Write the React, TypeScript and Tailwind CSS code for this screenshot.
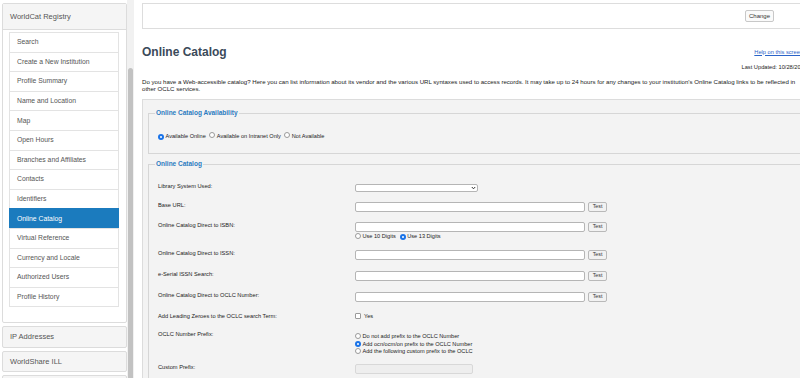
import React from "react";

const items = [
  "Search",
  "Create a New Institution",
  "Profile Summary",
  "Name and Location",
  "Map",
  "Open Hours",
  "Branches and Affiliates",
  "Contacts",
  "Identifiers",
  "Online Catalog",
  "Virtual Reference",
  "Currency and Locale",
  "Authorized Users",
  "Profile History",
];

function Radio({ checked }: { checked?: boolean }) {
  return checked ? (
    <span className="inline-flex w-[6px] h-[6px] rounded-full bg-[#1a73e8] items-center justify-center shrink-0">
      <span className="w-[2px] h-[2px] rounded-full bg-white" />
    </span>
  ) : (
    <span className="inline-block w-[6px] h-[6px] rounded-full border border-[#9a9a9a] bg-white shrink-0" />
  );
}

function TextInput({ w = "w-[230px]" }: { w?: string }) {
  return <div className={`${w} h-[10px] bg-white border border-[#b5b5b5] rounded-[2px]`} />;
}

function TestBtn() {
  return (
    <div className="ml-[3px] w-[19px] h-[10px] border border-[#b9b9b9] rounded-[2px] bg-[#f2f2f2] flex items-center justify-center text-[5.3px] leading-none text-[#333]">
      Test
    </div>
  );
}

function Row({ label, h, children }: { label: string; h: string; children: React.ReactNode }) {
  return (
    <div className={`flex items-start ${h}`}>
      <div className="w-[197px] shrink-0 text-[5.7px] leading-[7px] text-[#222]">{label}</div>
      <div className="mt-[0.5px]">{children}</div>
    </div>
  );
}

export default function App() {
  return (
    <div className="w-[800px] h-[378px] overflow-hidden bg-white flex font-['Liberation_Sans',Arial,sans-serif]">
      {/* Sidebar */}
      <aside className="w-[127px] shrink-0 pl-[2px] pt-[3px] flex flex-col gap-[3px]">
        <div className="border border-[#dcdcdc] rounded-[2px] bg-white">
          <div className="h-[26px] bg-[#f5f5f5] border-b border-[#dcdcdc] px-[7px] flex items-center text-[7.5px] text-[#555]">
            WorldCat Registry
          </div>
          <div className="pl-[6px] pr-[7px] pt-[2px] pb-[15px]">
            <div className="border-b border-[#e3e3e3]">
              {items.map((t) => (
                <div
                  key={t}
                  className={`h-[19.6px] border-t border-x flex items-center px-[7px] text-[6.8px] ${
                    t === "Online Catalog"
                      ? "bg-[#1b7bbe] border-[#1b7bbe] text-white"
                      : "border-[#e3e3e3] text-[#555]"
                  }`}
                >
                  {t}
                </div>
              ))}
            </div>
          </div>
        </div>
        <div className="h-[21.5px] shrink-0 bg-[#f5f5f5] border border-[#dcdcdc] rounded-[2px] px-[7px] flex items-center text-[7.5px] text-[#555]">
          IP Addresses
        </div>
        <div className="h-[21.5px] shrink-0 bg-[#f5f5f5] border border-[#dcdcdc] rounded-[2px] px-[7px] flex items-center text-[7.5px] text-[#555]">
          WorldShare ILL
        </div>
        <div className="h-[21.5px] shrink-0 bg-[#f5f5f5] border border-[#dcdcdc] rounded-[2px]" />
      </aside>

      {/* Scrollbar */}
      <div className="w-[7px] shrink-0 bg-[#f1f1f1] pt-[68px] flex justify-center">
        <div className="w-[5px] h-[330px] rounded-[3px] bg-[#c2c2c2]" />
      </div>

      {/* Main */}
      <main className="shrink-0 w-[680px] pl-[8px] pt-[3px]">
        <div className="w-[672px]">
          <div className="h-[26px] border border-[#dddddd] bg-white flex items-center justify-end pr-[39px]">
            <div className="h-[12px] px-[3px] border border-[#c8c8c8] rounded-[2px] bg-[#fafafa] flex items-center text-[6px] text-[#333]">
              Change
            </div>
          </div>

          <div className="w-[665px] mt-[16px] h-[14px] flex items-center justify-between">
            <h1 className="text-[12px] leading-[14px] font-bold text-[#3b4a5a]">Online Catalog</h1>
            <a className="mr-[4px] text-[5.7px] leading-[7px] text-[#2a63c8] underline">Help on this screen</a>
          </div>

          <div className="w-[665px] mt-[4.5px] flex justify-end text-[5.7px] leading-[7px] text-[#222]">
            Last Updated: 10/28/2021
          </div>

          <p className="mt-[7px] w-[656px] text-[6.1px] leading-[7px] text-[#222]">
            Do you have a Web-accessible catalog? Here you can list information about its vendor and the various URL
            syntaxes used to access records. It may take up to 24 hours for any changes to your institution's Online
            Catalog links to be reflected in other OCLC services.
          </p>

          <div className="mt-[7px] h-[300px] border border-[#dcdcdc] bg-[#f3f3f3] px-[5px] pt-[13px]">
            {/* Fieldset 1 */}
            <div className="h-[41px] border border-[#d6d6d6]">
              <div className="-mt-[4.5px] ml-[6px] w-fit px-[1px] bg-[#f3f3f3] text-[6.5px] leading-[8px] font-bold text-[#2b7bc0]">
                Online Catalog Availability
              </div>
              <div className="mt-[16px] pl-[9px] flex items-center h-[7px] text-[5.6px] text-[#222]">
                <Radio checked />
                <span className="ml-[1.5px]">Available Online</span>
                <span className="ml-[3.5px]">
                  <Radio />
                </span>
                <span className="ml-[1.5px]">Available on Intranet Only</span>
                <span className="ml-[3.5px]">
                  <Radio />
                </span>
                <span className="ml-[1.5px]">Not Available</span>
              </div>
            </div>

            {/* Fieldset 2 */}
            <div className="mt-[10px] h-[260px] border border-[#d6d6d6]">
              <div className="-mt-[4.5px] ml-[6px] w-fit px-[1px] bg-[#f3f3f3] text-[6.5px] leading-[8px] font-bold text-[#2b7bc0]">
                Online Catalog
              </div>
              <div className="mt-[14.5px] pl-[9px]">
                <Row label="Library System Used:" h="h-[19px]">
                  <div className="w-[123px] h-[8px] mt-[0.5px] bg-white border border-[#b5b5b5] rounded-[2px] flex items-center justify-end pr-[1.5px]">
                    <svg width="5" height="4" viewBox="0 0 5 4">
                      <path d="M0.8 1 L2.5 2.8 L4.2 1" fill="none" stroke="#333" strokeWidth="1" />
                    </svg>
                  </div>
                </Row>
                <Row label="Base URL:" h="h-[20px]">
                  <div className="flex">
                    <TextInput />
                    <TestBtn />
                  </div>
                </Row>
                <Row label="Online Catalog Direct to ISBN:" h="h-[28px]">
                  <div className="flex">
                    <TextInput />
                    <TestBtn />
                  </div>
                  <div className="mt-[1px] flex items-center h-[6px] text-[5.6px] text-[#222]">
                    <Radio />
                    <span className="ml-[1.5px]">Use 10 Digits</span>
                    <span className="ml-[4px]">
                      <Radio checked />
                    </span>
                    <span className="ml-[1.5px]">Use 13 Digits</span>
                  </div>
                </Row>
                <Row label="Online Catalog Direct to ISSN:" h="h-[21px]">
                  <div className="flex">
                    <TextInput />
                    <TestBtn />
                  </div>
                </Row>
                <Row label="e-Serial ISSN Search:" h="h-[21px]">
                  <div className="flex">
                    <TextInput />
                    <TestBtn />
                  </div>
                </Row>
                <Row label="Online Catalog Direct to OCLC Number:" h="h-[21px]">
                  <div className="flex">
                    <TextInput />
                    <TestBtn />
                  </div>
                </Row>
                <Row label="Add Leading Zeroes to the OCLC search Term:" h="h-[18.5px]">
                  <div className="flex items-center h-[6px] text-[5.6px] text-[#222]">
                    <span className="inline-block w-[6px] h-[6px] rounded-[1px] border border-[#9a9a9a] bg-white" />
                    <span className="ml-[3px]">Yes</span>
                  </div>
                </Row>
                <Row label="OCLC Number Prefix:" h="h-[32.5px]">
                  <div className="mt-[1px] flex flex-col text-[5.6px] text-[#222]">
                    <div className="flex items-center h-[7.5px]">
                      <Radio />
                      <span className="ml-[1.5px]">Do not add prefix to the OCLC Number</span>
                    </div>
                    <div className="flex items-center h-[7.5px]">
                      <Radio checked />
                      <span className="ml-[1.5px]">Add ocn/ocm/on prefix to the OCLC Number</span>
                    </div>
                    <div className="flex items-center h-[7.5px]">
                      <Radio />
                      <span className="ml-[1.5px]">Add the following custom prefix to the OCLC</span>
                    </div>
                  </div>
                </Row>
                <Row label="Custom Prefix:" h="h-[14px]">
                  <div className="w-[118px] h-[9.5px] bg-[#eeeeee] border border-[#d8d8d8] rounded-[2px]" />
                </Row>
              </div>
            </div>
          </div>
        </div>
      </main>
    </div>
  );
}
